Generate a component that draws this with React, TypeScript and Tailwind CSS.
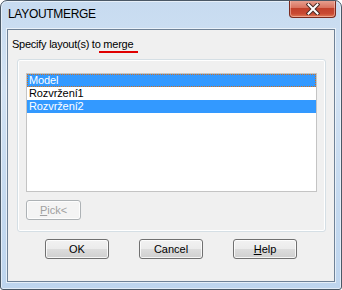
import React from "react";

const body = { fontFamily: '"Liberation Sans", Arial, sans-serif' };

function WinButton({ children, disabled = false, w = "w-[64px]" }: { children: React.ReactNode; disabled?: boolean; w?: string }) {
  return (
    <div
      className={`${w} h-[20px] rounded-[3px] border ${
        disabled ? "border-[#adb2b5] bg-[#f4f4f4] text-[#a0a0a0]" : "border-[#707070] text-black bg-[linear-gradient(to_bottom,#f2f2f2_0%,#ebebeb_50%,#dddddd_50%,#cfcfcf_100%)]"
      } flex items-center justify-center text-[11px] leading-[13px] shadow-[inset_0_0_0_1px_rgba(255,255,255,0.8)]`}
      style={body}
    >
      {children}
    </div>
  );
}

export default function App() {
  return (
    <div className="w-[342px] h-[290px] rounded-t-[7px] rounded-b-[3px] border border-[#4a5866] bg-[linear-gradient(to_bottom,#c7dbf0_0%,#d2e2f3_30%,#c4d9ef_70%,#bed5ee_100%)] flex flex-col overflow-hidden shadow-[inset_0_0_0_1px_rgba(255,255,255,0.55)]">
      <div className="h-[28px] flex items-start justify-between shrink-0">
        <div
          className="pl-[7px] pt-[6px] text-[12px] leading-[15px] text-black tracking-[-0.3px]"
          style={body}
        >
          LAYOUTMERGE
        </div>
        <div className="-mt-[1px] mr-[5px] w-[47px] h-[18px] rounded-b-[4px] border border-t-0 border-[#7a2a1e] bg-[linear-gradient(to_bottom,#e8a595_0%,#d9735f_45%,#c2412b_50%,#c94a33_80%,#e07a55_100%)] flex items-center justify-center shadow-[inset_0_0_0_1px_rgba(255,210,200,0.5)]">
          <svg width="14" height="12" viewBox="0 0 14 12">
            <path d="M2.5 1.5 L11.5 10.5 M11.5 1.5 L2.5 10.5" stroke="#4a2a24" strokeWidth="4" strokeLinecap="square" />
            <path d="M2.5 1.5 L11.5 10.5 M11.5 1.5 L2.5 10.5" stroke="#ffffff" strokeWidth="2" strokeLinecap="square" />
          </svg>
        </div>
      </div>
      <div className="mx-[6px] h-[253px] border border-[#6f8297] bg-[#f0f0f0] flex flex-col shadow-[0_0_0_1px_rgba(255,255,255,0.6)]" style={body}>
        <div className="pl-[4px] mt-[8px] h-[13px] text-[11px] leading-[13px] tracking-[-0.25px] text-black whitespace-nowrap">
          Specify layout(s) to{" "}
          <span className="relative">
            merge
            <span className="absolute left-[-4px] right-[-5px] bottom-[-3px] h-[2px] bg-[#e00000]" />
          </span>
        </div>
        <div className="ml-[9px] mt-[8px] w-[309px] h-[173px] rounded-[3px] border border-[#d5dfe5] shadow-[inset_0_0_0_1px_#ffffff] pl-[8px] pt-[13px] flex flex-col">
          <div className="w-[291px] h-[119px] border border-[#c4c4c4] bg-white flex flex-col text-[11px] leading-[13px] tracking-[-0.1px]">
            <div className="h-[13px] bg-[#3399ff] text-white border border-dotted border-[#d07020] pl-[1px] leading-[11px]">Model</div>
            <div className="h-[13px] text-black pl-[2px]">Rozvržení1</div>
            <div className="h-[13px] bg-[#3399ff] text-white pl-[2px]">Rozvržení2</div>
          </div>
          <div className="mt-[8px]">
            <WinButton disabled w="w-[55px]">
              <span><span className="underline">P</span>ick&lt;</span>
            </WinButton>
          </div>
        </div>
        <div className="mt-[7px] pl-[37px] flex gap-[30px]">
          <WinButton>OK</WinButton>
          <WinButton>Cancel</WinButton>
          <WinButton>
            <span><span className="underline">H</span>elp</span>
          </WinButton>
        </div>
      </div>
    </div>
  );
}
